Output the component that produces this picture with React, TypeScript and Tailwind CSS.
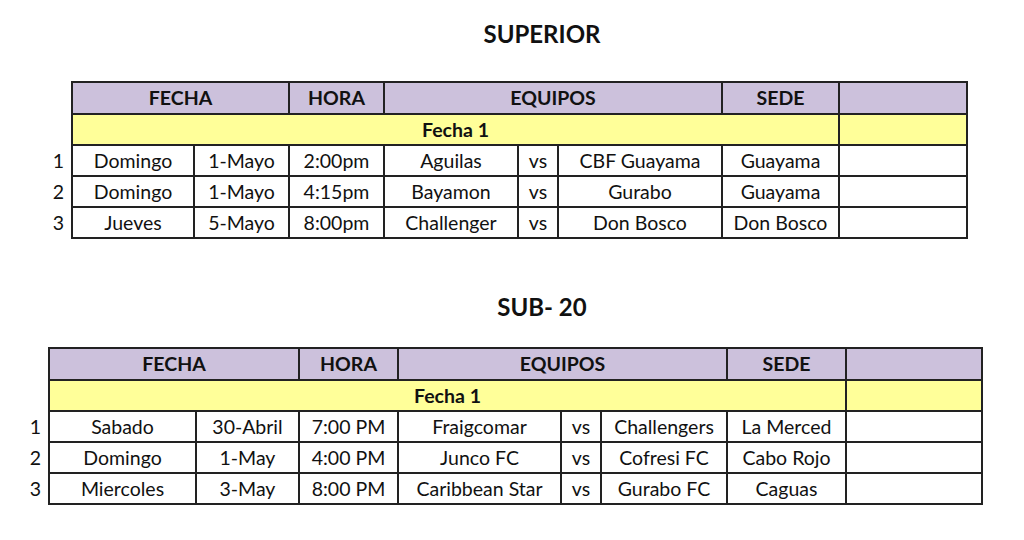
import React from "react";

interface Match { n: string; day: string; date: string; time: string; home: string; away: string; venue: string; }

interface Section {
  title: string;
  left: string;
  titleGap: string;
  tableGap: string;
  cols: number[];
  matches: Match[];
}

const sections: Section[] = [
  {
    title: "SUPERIOR",
    left: "ml-[42px]",
    titleGap: "pt-[19px]",
    tableGap: "mt-[32px]",
    cols: [30, 122, 95, 95, 134, 40, 164, 117, 128],
    matches: [
      { n: "1", day: "Domingo", date: "1-Mayo", time: "2:00pm", home: "Aguilas", away: "CBF Guayama", venue: "Guayama" },
      { n: "2", day: "Domingo", date: "1-Mayo", time: "4:15pm", home: "Bayamon", away: "Gurabo", venue: "Guayama" },
      { n: "3", day: "Jueves", date: "5-Mayo", time: "8:00pm", home: "Challenger", away: "Don Bosco", venue: "Don Bosco" },
    ],
  },
  {
    title: "SUB- 20",
    left: "ml-[19px]",
    titleGap: "pt-[53px]",
    tableGap: "mt-[25px]",
    cols: [30, 147, 103, 99, 163, 40, 126, 119, 136],
    matches: [
      { n: "1", day: "Sabado", date: "30-Abril", time: "7:00 PM", home: "Fraigcomar", away: "Challengers", venue: "La Merced" },
      { n: "2", day: "Domingo", date: "1-May", time: "4:00 PM", home: "Junco FC", away: "Cofresi FC", venue: "Cabo Rojo" },
      { n: "3", day: "Miercoles", date: "3-May", time: "8:00 PM", home: "Caribbean Star", away: "Gurabo FC", venue: "Caguas" },
    ],
  },
];

const cell = "border-2 border-[#222] text-center px-1 whitespace-nowrap";

const ScheduleTable = ({ s }: { s: Section }) => (
  <div className={s.titleGap}>
    <h2 className="text-[24px] font-bold text-[#111] text-center leading-[30px] pl-[60px]">{s.title}</h2>
    <table className={`${s.left} ${s.tableGap} table-fixed border-collapse text-[19.5px] leading-[24px] text-[#111]`}>
      <colgroup>
        {s.cols.map((w, i) => (
          <col key={i} style={{ width: w }} />
        ))}
      </colgroup>
      <tbody>
        <tr className="h-[32px] bg-[#ccc1dc] font-bold">
          <td className="bg-white"></td>
          <td colSpan={2} className={cell}>FECHA</td>
          <td className={cell}>HORA</td>
          <td colSpan={3} className={cell}>EQUIPOS</td>
          <td className={cell}>SEDE</td>
          <td className={cell}></td>
        </tr>
        <tr className="h-[31px] bg-[#ffff99] font-bold">
          <td className="bg-white"></td>
          <td colSpan={7} className={cell}>Fecha 1</td>
          <td className={cell}></td>
        </tr>
        {s.matches.map((m) => (
          <tr key={m.n} className="h-[31px]">
            <td className="text-center pl-1">{m.n}</td>
            <td className={cell}>{m.day}</td>
            <td className={cell}>{m.date}</td>
            <td className={cell}>{m.time}</td>
            <td className={cell}>{m.home}</td>
            <td className={cell}>vs</td>
            <td className={cell}>{m.away}</td>
            <td className={cell}>{m.venue}</td>
            <td className={cell}></td>
          </tr>
        ))}
      </tbody>
    </table>
  </div>
);

export default function App() {
  return (
    <div className="w-[1024px] h-[540px] bg-white overflow-hidden" style={{ fontFamily: "Lato, 'Open Sans', sans-serif" }}>
      {sections.map((s) => (
        <ScheduleTable key={s.title} s={s} />
      ))}
    </div>
  );
}
